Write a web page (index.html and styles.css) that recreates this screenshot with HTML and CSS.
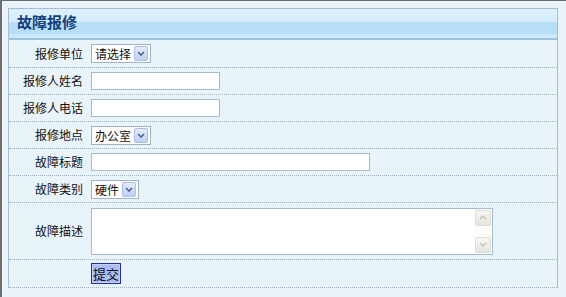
FILE: index.html
```html
<!DOCTYPE html>
<html>
<head>
    <title>故障报修</title>
    <link rel="stylesheet" href="styles.css">
</head>
<body>
    <div class="frame">
        <div class="panel">
            <div class="panel-head"><h2>故障报修</h2></div>

            <form class="form">
                <div class="row row-first">
                    <label>报修单位</label>
                    <div class="sel">
                        <select class="sel-w1"><option>请选择</option></select>
                        <span class="sel-btn"><svg width="8" height="5" viewBox="0 0 8 5"><path d="M1 1l3 3 3-3" fill="none" stroke="#4b6190" stroke-width="1.6"/></svg></span>
                    </div>
                </div>
                <div class="row">
                    <label>报修人姓名</label>
                    <input class="txt" type="text">
                </div>
                <div class="row">
                    <label>报修人电话</label>
                    <input class="txt" type="text">
                </div>
                <div class="row">
                    <label>报修地点</label>
                    <div class="sel">
                        <select class="sel-w1"><option>办公室</option></select>
                        <span class="sel-btn"><svg width="8" height="5" viewBox="0 0 8 5"><path d="M1 1l3 3 3-3" fill="none" stroke="#4b6190" stroke-width="1.6"/></svg></span>
                    </div>
                </div>
                <div class="row">
                    <label>故障标题</label>
                    <input class="txt txt-wide" type="text">
                </div>
                <div class="row">
                    <label>故障类别</label>
                    <div class="sel">
                        <select class="sel-w2"><option>硬件</option></select>
                        <span class="sel-btn"><svg width="8" height="5" viewBox="0 0 8 5"><path d="M1 1l3 3 3-3" fill="none" stroke="#4b6190" stroke-width="1.6"/></svg></span>
                    </div>
                </div>
                <div class="row row-memo">
                    <label>故障描述</label>
                    <div class="memo">
                        <textarea></textarea>
                        <div class="scroll">
                            <span><svg width="8" height="5" viewBox="0 0 8 5"><path d="M1 4l3-3 3 3" fill="none" stroke="#c3c5bc" stroke-width="1.4"/></svg></span>
                            <span><svg width="8" height="5" viewBox="0 0 8 5"><path d="M1 1l3 3 3-3" fill="none" stroke="#c3c5bc" stroke-width="1.4"/></svg></span>
                        </div>
                    </div>
                </div>
                <div class="row row-last">
                    <label></label>
                    <button type="button" class="btn">提交</button>
                </div>
            </form>
        </div>
    </div>
</body>
</html>
```

FILE: styles.css
```css
html, body {
    margin: 0;
    height: 100%;
}
body {
    background: #e9f3f9;
    font-family: "Noto Sans CJK SC", "Liberation Sans", sans-serif;
    font-size: 12px;
    color: #111;
}
.frame {
    box-sizing: border-box;
    min-height: 100%;
    border-top: 1px solid #6e6e6e;
    border-left: 2px solid #6e6e6e;
    padding: 7px 0 0 6px;
}
.panel {
    width: 550px;
    box-sizing: border-box;
    border: 1px solid #a7bdd2;
    border-bottom: none;
    background: #e8f3fa;
}
.panel-head {
    height: 29px;
    border-bottom: 2px solid #9dbfe0;
    background: linear-gradient(#ddf1fc 0, #d4edfb 13px, #b6def7 13px, #b6def7 25px, #cde8f9 25px);
}
.panel-head h2 {
    margin: 0;
    padding: 2px 0 0 8px;
    font-size: 15px;
    line-height: 21px;
    font-weight: bold;
    color: #153f7c;
}
.form {
    margin: 0;
}
.row {
    display: flex;
    align-items: center;
    height: 27px;
    box-sizing: border-box;
    border-bottom: 1px dotted #9cb0c4;
}
.row-first {
    height: 28px;
}
.row-memo {
    height: 57px;
}
.row-last {
    height: 28px;
}
.row label {
    width: 74px;
    margin-right: 8px;
    text-align: right;
    line-height: 16px;
}
.txt {
    width: 129px;
    height: 18px;
    box-sizing: border-box;
    border: 1px solid #a6b9cd;
    background: #fff;
    padding: 0 2px;
    font: inherit;
}
.txt-wide {
    width: 279px;
}
.sel {
    display: inline-flex;
    align-items: center;
    height: 19px;
    box-sizing: border-box;
    border: 1px solid #a2b2c5;
    background: #fff;
    padding-right: 2px;
}
.sel select {
    appearance: none;
    -webkit-appearance: none;
    border: 0;
    background: transparent;
    font: inherit;
    color: #111;
    padding: 0 0 0 3px;
    height: 17px;
    outline: none;
}
.sel-w1 {
    width: 42px;
}
.sel-w2 {
    width: 30px;
}
.sel-btn {
    width: 14px;
    height: 15px;
    box-sizing: border-box;
    border: 1px solid #a9bfe9;
    border-radius: 2px;
    background: linear-gradient(#e4ecfc, #bdd0f4);
    display: flex;
    align-items: center;
    justify-content: center;
}
.memo {
    display: flex;
    width: 402px;
    height: 47px;
    box-sizing: border-box;
    border: 1px solid #a6b9cd;
    background: #fff;
}
.memo textarea {
    flex: 1;
    border: 0;
    resize: none;
    outline: none;
    font: inherit;
    padding: 2px;
}
.scroll {
    width: 16px;
    display: flex;
    flex-direction: column;
    justify-content: space-between;
    background: #fcfcf8;
    padding: 1px 1px 1px 0;
}
.scroll span {
    height: 16px;
    box-sizing: border-box;
    border: 1px solid #dcded6;
    border-radius: 2px;
    background: linear-gradient(#f6f6f1, #e4e6de);
    display: flex;
    align-items: center;
    justify-content: center;
}
.btn {
    width: 30px;
    height: 21px;
    padding: 0;
    border: 1px solid #1f2f9c;
    box-shadow: inset 0 0 0 1px #c3d0fa;
    background: #a9bcf5;
    font: inherit;
    font-size: 13px;
    color: #111;
    cursor: pointer;
}
```
